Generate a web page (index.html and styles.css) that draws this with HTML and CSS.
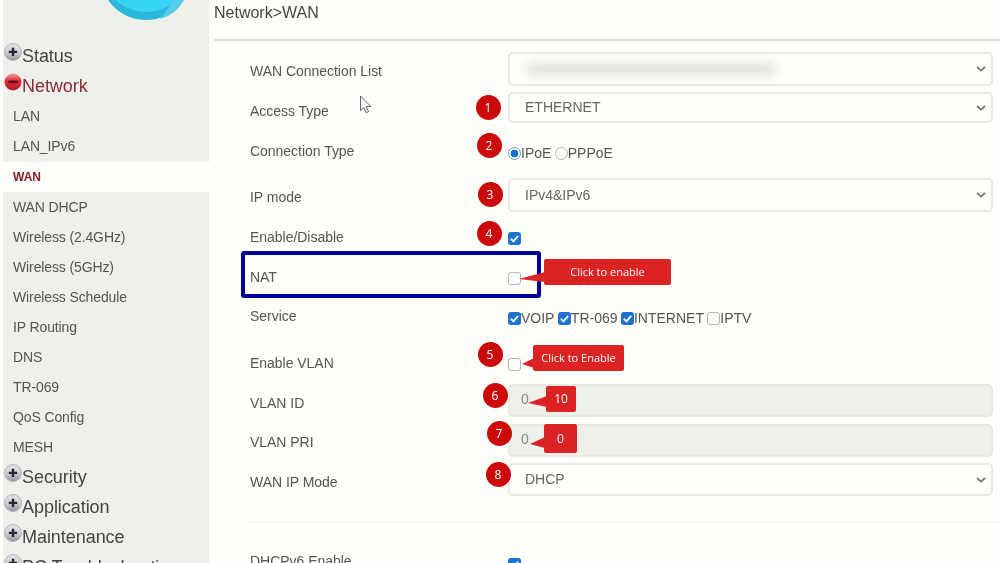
FILE: index.html
```html
<!DOCTYPE html>
<html lang="en">
<head>
<meta charset="utf-8">
<title>Network&gt;WAN</title>
<link rel="stylesheet" href="styles.css">
</head>
<body>
<svg class="defs" width="0" height="0" aria-hidden="true">
  <defs>
    <linearGradient id="gray" x1="0" y1="0" x2="0" y2="1">
      <stop offset="0" stop-color="#e4e4ea"/><stop offset=".5" stop-color="#cfcfd8"/><stop offset="1" stop-color="#94949e"/>
    </linearGradient>
    <linearGradient id="red" x1="0" y1="0" x2="0" y2="1">
      <stop offset="0" stop-color="#f4a0a6"/><stop offset=".45" stop-color="#dc2a36"/><stop offset="1" stop-color="#b81c28"/>
    </linearGradient>
    <symbol id="plus" viewBox="0 0 18 18">
      <circle cx="9" cy="9" r="8.5" fill="url(#gray)" stroke="#a8a8b0" stroke-width=".8"/>
      <path d="M4.8 7.8h3V4.8h2.4v3h3v2.3h-3v3H7.8v-3h-3z" fill="#26262c"/>
    </symbol>
    <symbol id="minus" viewBox="0 0 18 18">
      <circle cx="9" cy="9" r="8.5" fill="url(#red)"/>
      <rect x="4.4" y="7.6" width="9.2" height="2.5" fill="#5a1218"/>
    </symbol>
  </defs>
</svg>
<div class="page">
  <nav class="sidebar">
    <svg class="logo" width="206" height="41" viewBox="0 0 206 41" aria-hidden="true">
      <circle cx="143" cy="-26" r="46" fill="#2bb6db"/>
      <circle cx="143" cy="-33" r="45" fill="#37d5f5"/>
      <path d="M157 19 Q165 10 170 0 L181 0 Q173 15 157 19z" fill="#55cdea"/>
    </svg>
    <a class="group"><svg class="toggle"><use href="#plus"/></svg>Status</a>
    <a class="group group-open"><svg class="toggle"><use href="#minus"/></svg>Network</a>
    <ul class="sub">
      <li>LAN</li>
      <li>LAN_IPv6</li>
      <li class="current">WAN</li>
      <li>WAN DHCP</li>
      <li>Wireless (2.4GHz)</li>
      <li>Wireless (5GHz)</li>
      <li>Wireless Schedule</li>
      <li>IP Routing</li>
      <li>DNS</li>
      <li>TR-069</li>
      <li>QoS Config</li>
      <li>MESH</li>
    </ul>
    <a class="group"><svg class="toggle"><use href="#plus"/></svg>Security</a>
    <a class="group"><svg class="toggle"><use href="#plus"/></svg>Application</a>
    <a class="group"><svg class="toggle"><use href="#plus"/></svg>Maintenance</a>
    <a class="group"><svg class="toggle"><use href="#plus"/></svg>PC Troubleshooting</a>
  </nav>

  <main class="main">
    <h1 class="title">Network&gt;WAN</h1>
    <form class="form">
      <div class="row row-list">
        <span class="label">WAN Connection List</span>
        <div class="control blurred-wrap">
          <select class="field tall"><option></option></select>
          <span class="blurred"></span>
        </div>
      </div>
      <div class="row row-access">
        <span class="label">Access Type</span>
        <div class="control"><select class="field short"><option>ETHERNET</option></select></div>
      </div>
      <div class="row row-conn">
        <span class="label">Connection Type</span>
        <div class="control options">
          <label><input type="radio" name="conn" checked>IPoE</label>
          <label><input type="radio" name="conn">PPPoE</label>
        </div>
      </div>
      <div class="row row-ipmode">
        <span class="label">IP mode</span>
        <div class="control"><select class="field tall"><option>IPv4&amp;IPv6</option></select></div>
      </div>
      <div class="row row-enable">
        <span class="label">Enable/Disable</span>
        <div class="control"><input class="check" type="checkbox" checked></div>
      </div>
      <div class="row row-nat">
        <span class="label">NAT</span>
        <div class="control"><input class="check" type="checkbox"></div>
      </div>
      <div class="row row-service">
        <span class="label">Service</span>
        <div class="control options">
          <label><input type="checkbox" checked>VOIP</label>
          <label><input type="checkbox" checked>TR-069</label>
          <label><input type="checkbox" checked>INTERNET</label>
          <label><input type="checkbox">IPTV</label>
        </div>
      </div>
      <div class="row row-vlan">
        <span class="label">Enable VLAN</span>
        <div class="control"><input class="check" type="checkbox"></div>
      </div>
      <div class="row row-vid">
        <span class="label">VLAN ID</span>
        <div class="control"><div class="field readonly">0</div></div>
      </div>
      <div class="row row-vpri">
        <span class="label">VLAN PRI</span>
        <div class="control"><div class="field readonly">0</div></div>
      </div>
      <div class="row row-wanip">
        <span class="label">WAN IP Mode</span>
        <div class="control"><select class="field short"><option>DHCP</option></select></div>
      </div>
      <div class="divider"></div>
      <div class="row row-dhcp6">
        <span class="label">DHCPv6 Enable</span>
        <div class="control"><input class="check" type="checkbox" checked></div>
      </div>
    </form>
  </main>

  <div class="notes">
    <div class="nat-box"></div>
    <svg class="cursor" width="14" height="20" viewBox="0 0 14 20" aria-hidden="true">
      <path d="M1.5 1v14.5l3.4-3 2.3 5.2 2.4-1-2.3-5.1h4.6z" fill="#fff" stroke="#666" stroke-width="1"/>
    </svg>
    <svg class="tails" width="1000" height="563" viewBox="0 0 1000 563" aria-hidden="true">
      <polygon points="545,272 519,279 545,282"/>
      <polygon points="534,358 522,364 534,368"/>
      <polygon points="547,396 528,403 547,407"/>
      <polygon points="545,437 530,444 545,448"/>
    </svg>
    <span class="badge b1">1</span>
    <span class="badge b2">2</span>
    <span class="badge b3">3</span>
    <span class="badge b4">4</span>
    <span class="badge b5">5</span>
    <span class="badge b6">6</span>
    <span class="badge b7">7</span>
    <span class="badge b8">8</span>
    <span class="callout c1">Click to enable</span>
    <span class="callout c2">Click to Enable</span>
    <span class="callout c3">10</span>
    <span class="callout c4">0</span>
  </div>
</div>
</body>
</html>
```
FILE: styles.css
```css
* { box-sizing: border-box; }
html, body { margin: 0; height: 100%; overflow: hidden; }
body { background: #fefefa; font-family: "Liberation Sans", Arial, sans-serif; color: #555; }
.defs { position: absolute; }
.page { position: relative; display: flex; width: 1000px; height: 563px; overflow: hidden; background: #fefefa; padding-left: 3px; filter: blur(.35px); }

/* sidebar */
.sidebar { flex: 0 0 206px; height: 563px; background: #eef0ea; overflow: hidden; }
.logo { display: block; }
.group { display: flex; align-items: center; height: 30px; font-size: 18px; color: #444; position: relative; padding-left: 19px; letter-spacing: -.05px; }
.group-open { color: #8b2a35; }
.toggle { position: absolute; left: 1px; top: 2px; width: 18px; height: 18px; }
.sub { list-style: none; margin: 1px 0 0; padding: 0; }
.sub li { height: 30px; line-height: 30px; padding-left: 10px; font-size: 14px; letter-spacing: -.12px; color: #555; }
.sub li:nth-child(-n+2) { line-height: 29px; }
.sub li:nth-last-child(-n+2) { line-height: 31px; }
.sub li.current { background: #fefefa; color: #8b1a2a; font-size: 12px; line-height: 31px; font-weight: bold; letter-spacing: 0; }

/* main */
.main { flex: 1; margin-left: 5px; min-width: 0; }
.title { margin: 0; height: 41px; border-bottom: 2px solid #dededa; font-size: 16px; font-weight: normal; line-height: 26px; color: #444; }
.form { padding: 11px 0 0 36px; }
.row { display: flex; align-items: flex-start; height: var(--h); }
.label { flex: 0 0 258px; padding-top: var(--lt, 0); font-size: 14px; line-height: 16px; letter-spacing: -.03px; color: #555; }
.control { width: 485px; padding-top: var(--ct, 0); }
.row-list { --h: 40px; --lt: 11px; }
.row-access { --h: 51px; --lt: 11px; }
.row-conn { --h: 35px; }
.row-ipmode { --h: 51px; --lt: 11px; }
.row-enable { --h: 39px; --ct: 3px; }
.row-nat { --h: 40px; --ct: 4px; --lt: 1px; }
.row-service { --h: 47px; }
.row-vlan { --h: 29px; --ct: 3px; }
.row-vid { --h: 40px; --lt: 11px; }
.row-vpri { --h: 39px; --lt: 10px; }
.row-wanip { --h: 59px; --lt: 11px; }
.row-dhcp6 { --h: 30px; --ct: 5px; }

.field { display: block; width: 100%; border: 2px solid #e9e9e4; border-radius: 5px; background: #fefefa; color: #666; font: 14px "Liberation Sans", Arial, sans-serif; }
select.field { appearance: none; -webkit-appearance: none; padding: 0 0 0 15px; background-image: url("data:image/svg+xml,%3Csvg xmlns='http://www.w3.org/2000/svg' width='10' height='6'%3E%3Cpath d='M1 1l4 3.6L9 1' fill='none' stroke='%23777' stroke-width='1.8'/%3E%3C/svg%3E"); background-repeat: no-repeat; background-position: right 5px center; }
.tall { height: 34px; }
select.short { height: 31px; padding-bottom: 2px; }
.row-wanip select.short { height: 33px; }
.readonly { height: 33px; line-height: 27px; background: #eef0e9; color: #888; padding-left: 11px; }
.blurred-wrap { position: relative; }
.blurred { position: absolute; left: 18px; top: 10px; width: 250px; height: 14px; border-radius: 7px; background: #e2e2de; filter: blur(5px); }

.options { font-size: 14px; line-height: 20px; color: #555; }
.options label { margin-right: -.5px; }
.options input, .check { appearance: none; -webkit-appearance: none; margin: 0; width: 13px; height: 13px; background: #fefefa; border: 1.5px solid #b4b4ae; border-radius: 3px; }
.options input { vertical-align: -2px; }
.check { display: block; }
input[type="radio"] { border-radius: 50%; }
input[type="radio"]:checked { border: 1.5px solid #5c9ee0; background: radial-gradient(circle, #1a6fd0 0 3.6px, #fefefa 4.2px); }
input[type="checkbox"]:checked { border: 0; background: #1a73d0 url("data:image/svg+xml,%3Csvg xmlns='http://www.w3.org/2000/svg' width='13' height='13'%3E%3Cpath d='M2.8 6.6l2.6 2.7 4.8-5.4' fill='none' stroke='%23fff' stroke-width='1.9'/%3E%3C/svg%3E") center no-repeat; }
.divider { height: 1px; margin: 0 0 30px -2px; background: #f2f2ee; }

/* annotations over the page */
.notes { position: absolute; inset: 0; pointer-events: none; }
.nat-box { position: absolute; left: 241px; top: 251px; width: 300px; height: 47px; border: 4px solid #00009a; border-radius: 3px; }
.cursor { position: absolute; left: 359px; top: 95px; }
.tails { position: absolute; left: 0; top: 0; fill: #dc2222; }
.badge { position: absolute; width: 25px; height: 25px; margin: -12.5px 0 0 -12.5px; border-radius: 50%; background: #cc0a0a; color: #fff; font: 12px/25px "Open Sans", sans-serif; text-align: center; }
.b1 { left: 488px; top: 107px; }
.b2 { left: 489px; top: 145px; }
.b3 { left: 490px; top: 194px; }
.b4 { left: 489px; top: 233px; }
.b5 { left: 490px; top: 354px; }
.b6 { left: 495px; top: 395px; }
.b7 { left: 499px; top: 433px; }
.b8 { left: 498px; top: 474px; }
.callout { position: absolute; display: flex; align-items: center; justify-content: center; padding-bottom: 1px; border-radius: 2px; background: #dc2222; color: #fff; font: 11px "Open Sans", sans-serif; }
.c1 { left: 544px; top: 259px; width: 127px; height: 26px; }
.c2 { left: 533px; top: 345px; width: 91px; height: 26px; }
.c3 { left: 546px; top: 386px; width: 30px; height: 26px; font-size: 12px; }
.c4 { left: 544px; top: 424px; width: 33px; height: 29px; font-size: 12px; }
```
